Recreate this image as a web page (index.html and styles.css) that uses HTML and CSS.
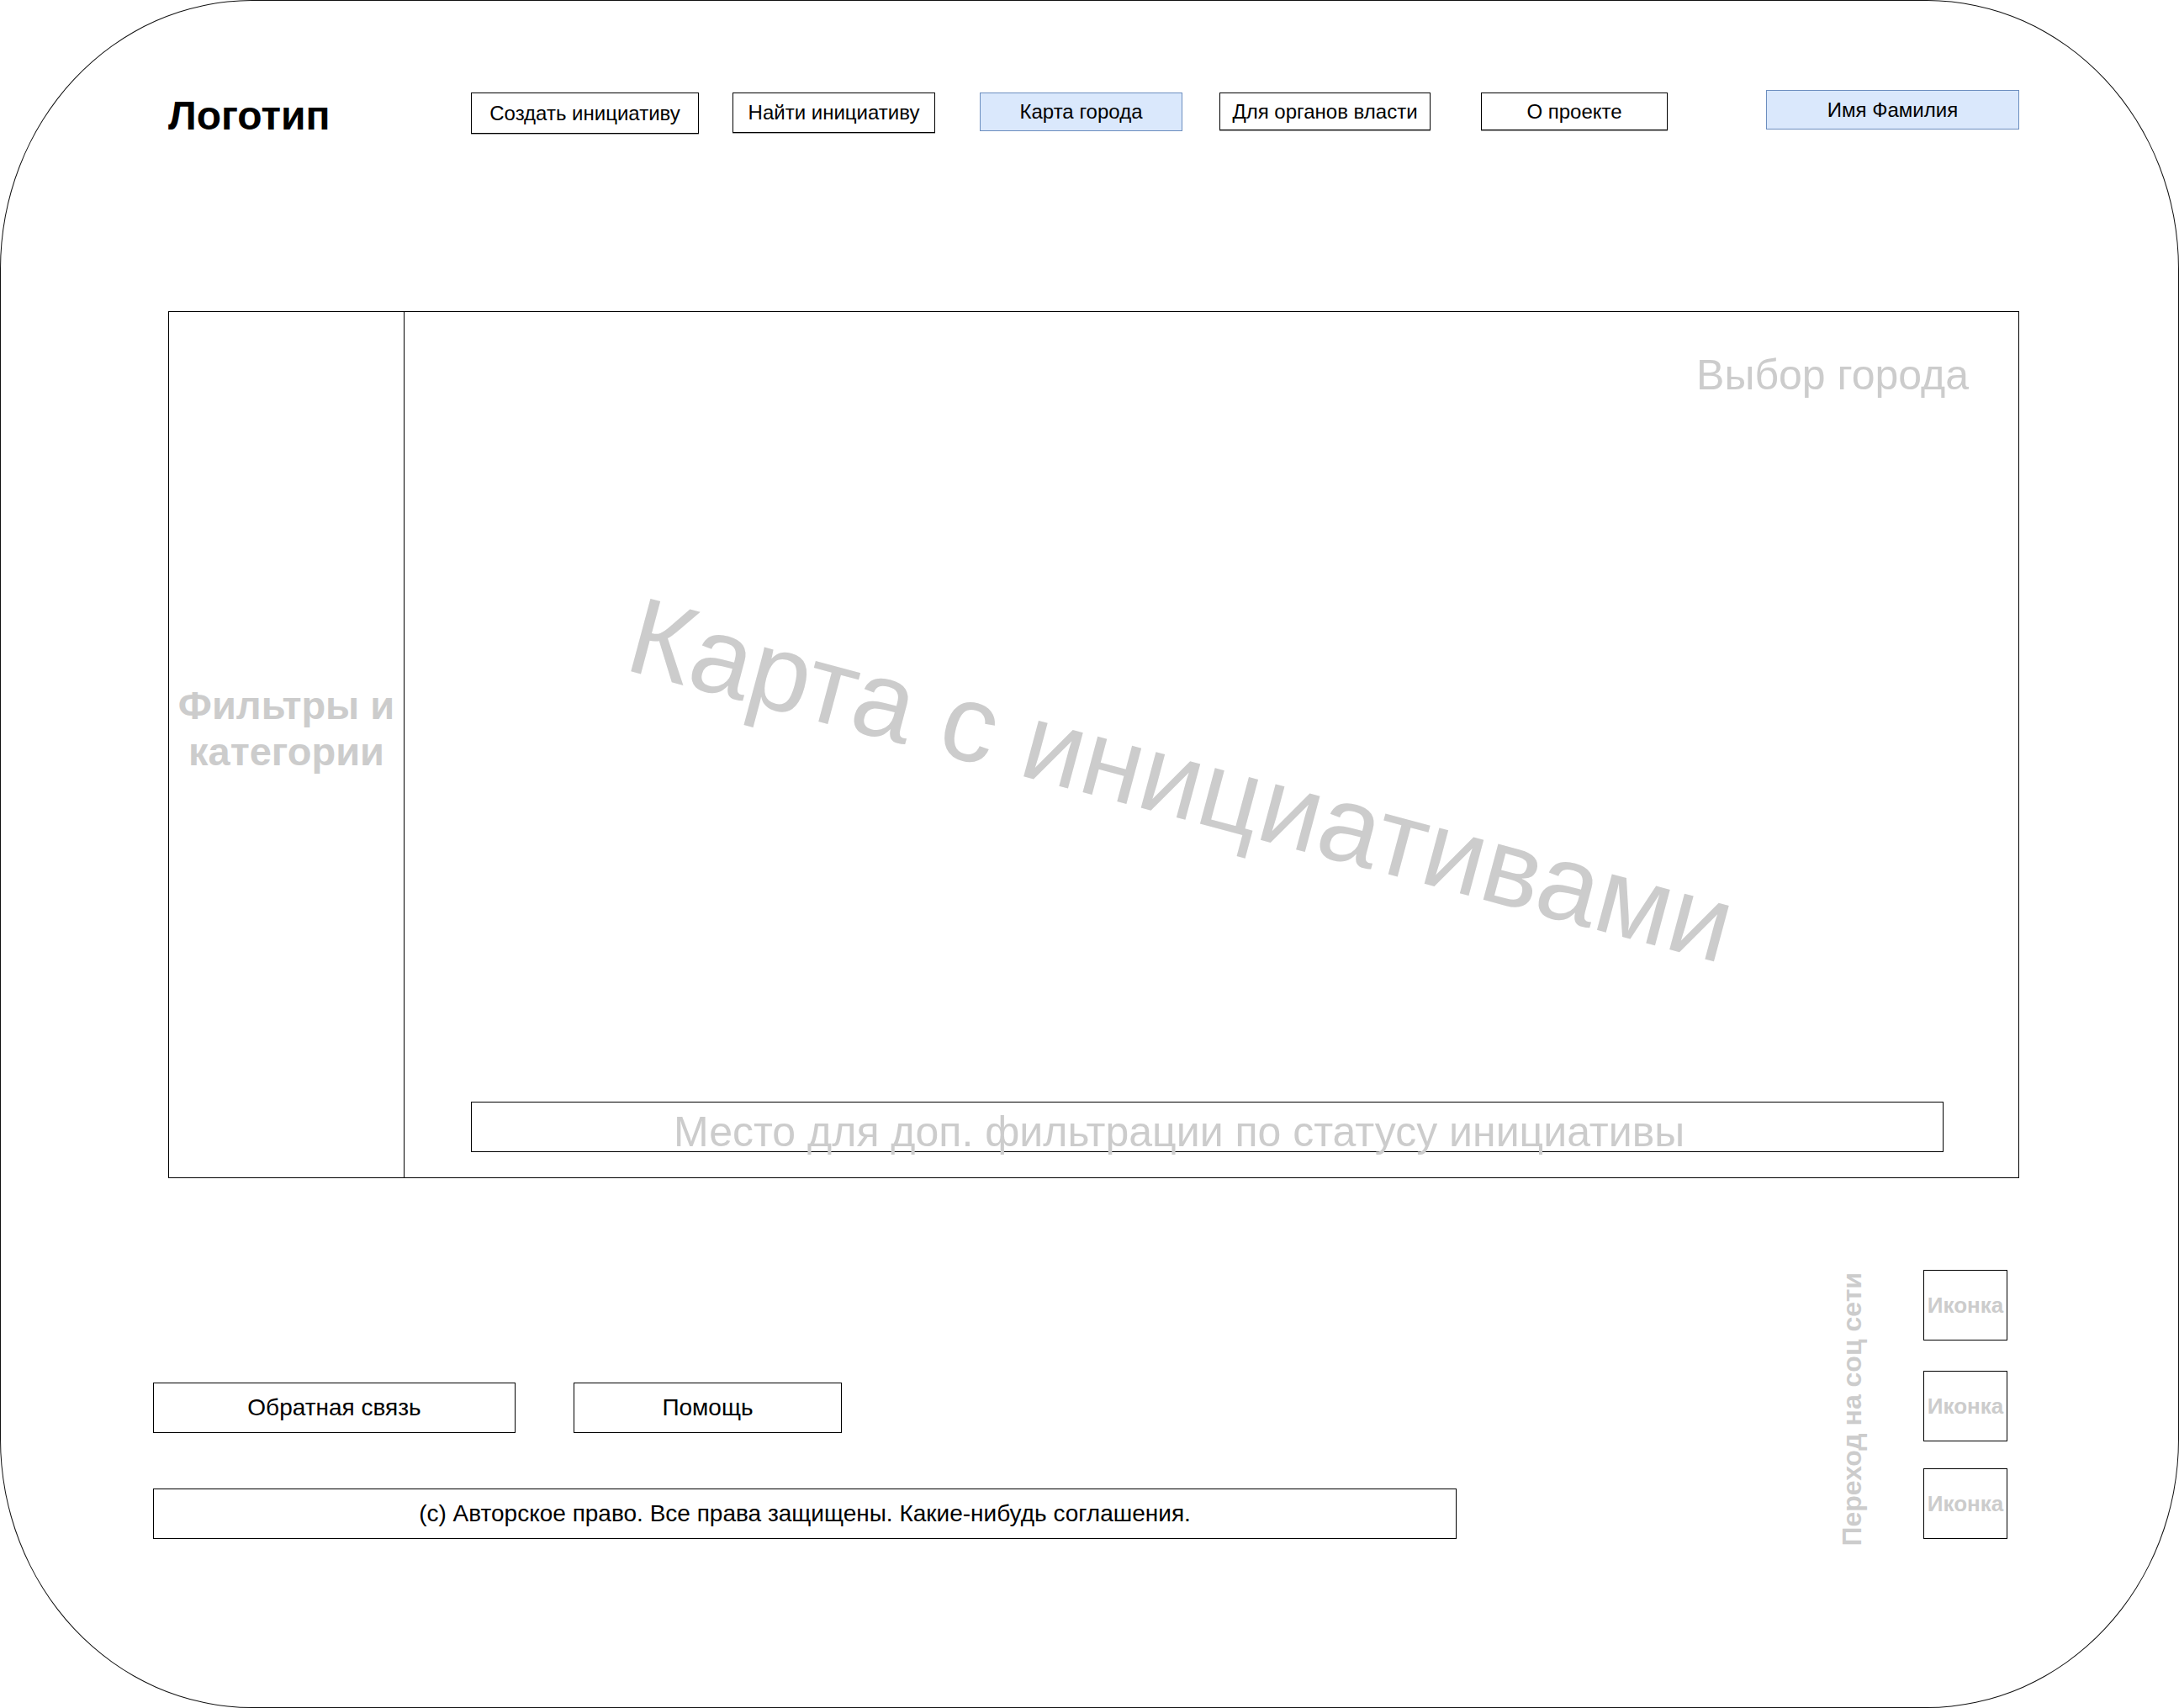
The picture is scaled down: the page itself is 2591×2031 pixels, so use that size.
FILE: index.html
```html
<!DOCTYPE html>
<html lang="ru">
<head>
<meta charset="utf-8">
<title>Карта города</title>
<link rel="stylesheet" href="styles.css">
</head>
<body>
<div class="frame">
  <header class="header">
    <div class="logo">Логотип</div>
    <nav class="nav">
      <a class="nav-btn nav-btn--create">Создать инициативу</a>
      <a class="nav-btn nav-btn--find">Найти инициативу</a>
      <a class="nav-btn nav-btn--map nav-btn--active">Карта города</a>
      <a class="nav-btn nav-btn--gov">Для органов власти</a>
      <a class="nav-btn nav-btn--about">О проекте</a>
      <a class="nav-btn nav-btn--user nav-btn--active">Имя Фамилия</a>
    </nav>
  </header>

  <main class="main">
    <aside class="sidebar">
      <div class="sidebar-title">Фильтры и<br>категории</div>
    </aside>
    <section class="map">
      <div class="city">Выбор города</div>
      <div class="map-title">Карта с инициативами</div>
      <div class="status-bar">Место для доп. фильтрации по статусу инициативы</div>
    </section>
  </main>

  <footer class="footer">
    <div class="footer-left">
      <div class="footer-links">
        <a class="footer-btn footer-btn--feedback">Обратная связь</a>
        <a class="footer-btn footer-btn--help">Помощь</a>
      </div>
      <div class="copyright">(c) Авторское право. Все права защищены. Какие-нибудь соглашения.</div>
    </div>
    <div class="social">
      <div class="social-label">Переход на соц сети</div>
      <div class="social-icons">
        <div class="icon-box">Иконка</div>
        <div class="icon-box icon-box--second">Иконка</div>
        <div class="icon-box icon-box--third">Иконка</div>
      </div>
    </div>
  </footer>
</div>
</body>
</html>
```

FILE: styles.css
```css
html, body {
  margin: 0;
  padding: 0;
  background: #ffffff;
}

body {
  font-family: "Liberation Sans", Arial, sans-serif;
  color: #000;
}

.frame {
  position: relative;
  width: 2591px;
  height: 2031px;
  box-sizing: border-box;
  border: 1px solid #111;
  border-radius: 300px / 320px;
  overflow: hidden;
}

/* Header */
.header {
  display: flex;
  align-items: flex-start;
  height: 52px;
  margin: 106px 0 0 199px;
}

.logo {
  width: 360px;
  margin-top: 7px;
  font-weight: bold;
  font-size: 48px;
  line-height: 48px;
}

.nav {
  display: flex;
  align-items: flex-start;
}

.nav-btn {
  display: flex;
  align-items: center;
  justify-content: center;
  box-sizing: border-box;
  margin-top: 3px;
  border: 1px solid #000;
  background: #fff;
  font-size: 24px;
  line-height: 1;
  white-space: nowrap;
  box-shadow: 0 1px 0 rgba(0, 0, 0, 0.35);
}

.nav-btn--active {
  background: #dae8fc;
  border-color: #6c8ebf;
  box-shadow: none;
}

.nav-btn--create { width: 271px; height: 49px; }
.nav-btn--find   { width: 241px; height: 48px; margin-left: 40px; }
.nav-btn--map    { width: 241px; height: 46px; margin-left: 53px; }
.nav-btn--gov    { width: 251px; height: 45px; margin-left: 44px; }
.nav-btn--about  { width: 222px; height: 45px; margin-left: 60px; }
.nav-btn--user   { width: 301px; height: 47px; margin-left: 117px; margin-top: 0; }

/* Main */
.main {
  display: flex;
  box-sizing: border-box;
  width: 2201px;
  height: 1031px;
  margin: 211px 0 0 199px;
  border: 1px solid #000;
}

.sidebar {
  display: flex;
  align-items: center;
  justify-content: center;
  box-sizing: border-box;
  width: 280px;
  border-right: 1px solid #000;
  padding-bottom: 40px;
}

.sidebar-title {
  text-align: center;
  font-weight: bold;
  font-size: 47px;
  line-height: 55px;
  color: #cccccc;
  white-space: nowrap;
}

.map {
  position: relative;
  flex: 1;
  display: flex;
  flex-direction: column;
}

.city {
  align-self: flex-end;
  margin: 50px 59px 0 0;
  font-size: 50px;
  line-height: 50px;
  color: #cccccc;
  white-space: nowrap;
}

.map-title {
  position: absolute;
  left: 924px;
  top: 556px;
  transform: translate(-50%, -50%) rotate(15deg);
  font-size: 130px;
  line-height: 1;
  color: #cccccc;
  white-space: nowrap;
}

.status-bar {
  box-sizing: border-box;
  width: 1751px;
  height: 60px;
  margin: auto 0 30px 79px;
  padding: 10px 0 0 240px;
  border: 1px solid #000;
  font-size: 50px;
  line-height: 50px;
  color: #cccccc;
  white-space: nowrap;
  overflow: visible;
}

/* Footer */
.footer {
  display: flex;
  align-items: flex-end;
  justify-content: space-between;
  margin: 109px 203px 0 181px;
}

.footer-left {
  display: flex;
  flex-direction: column;
  gap: 66px;
}

.footer-links {
  display: flex;
  gap: 69px;
}

.footer-btn {
  display: flex;
  align-items: center;
  justify-content: center;
  box-sizing: border-box;
  height: 60px;
  border: 1px solid #000;
  font-size: 28px;
  line-height: 1;
}

.footer-btn--feedback { width: 431px; }
.footer-btn--help     { width: 319px; }

.copyright {
  display: flex;
  align-items: center;
  justify-content: center;
  box-sizing: border-box;
  width: 1550px;
  height: 60px;
  border: 1px solid #000;
  font-size: 28px;
  line-height: 1;
  white-space: nowrap;
}

.social {
  display: flex;
  align-items: center;
  gap: 69px;
  height: 320px;
}

.social-label {
  writing-mode: vertical-rl;
  transform: translateY(6px) rotate(180deg);
  font-weight: bold;
  font-size: 32px;
  line-height: 32px;
  color: #cccccc;
  white-space: nowrap;
}

.social-icons {
  display: flex;
  flex-direction: column;
}

.icon-box {
  display: flex;
  align-items: center;
  justify-content: center;
  box-sizing: border-box;
  width: 100px;
  height: 84px;
  border: 1px solid #000;
  font-weight: bold;
  font-size: 26px;
  line-height: 1;
  color: #cccccc;
}

.icon-box--second { margin-top: 36px; }
.icon-box--third  { margin-top: 32px; }
```
